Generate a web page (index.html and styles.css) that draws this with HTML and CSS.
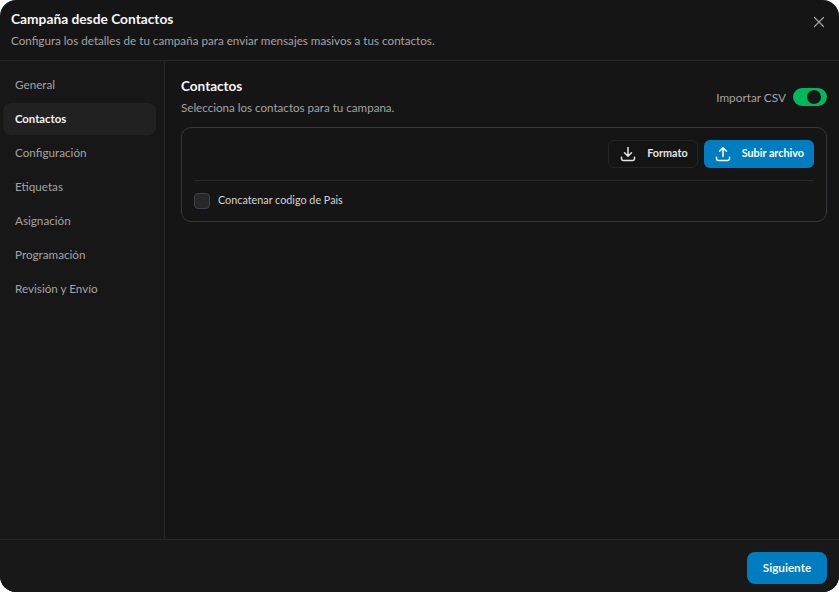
FILE: index.html
```html
<!DOCTYPE html>
<html lang="es">
<head>
<meta charset="utf-8">
<title>Campaña desde Contactos</title>
<link rel="stylesheet" href="styles.css">
</head>
<body>
<div class="modal">
  <header class="head">
    <div>
      <h1 class="title">Campaña desde Contactos</h1>
      <p class="sub">Configura los detalles de tu campaña para enviar mensajes masivos a tus contactos.</p>
    </div>
    <button class="close" aria-label="Cerrar">
      <svg width="16" height="16" viewBox="0 0 16 16" fill="none" stroke="currentColor" stroke-width="1.2" stroke-linecap="round"><path d="M3.5 3.5l9 9M12.5 3.5l-9 9"/></svg>
    </button>
  </header>
  <div class="body">
    <nav class="side">
      <a class="item">General</a>
      <a class="item active">Contactos</a>
      <a class="item">Configuración</a>
      <a class="item">Etiquetas</a>
      <a class="item">Asignación</a>
      <a class="item">Programación</a>
      <a class="item">Revisión y Envío</a>
    </nav>
    <main class="main">
      <div class="row-top">
        <div>
          <h2 class="h2">Contactos</h2>
          <p class="sub2">Selecciona los contactos para tu campana.</p>
        </div>
        <div class="csv">
          <span class="csv-label">Importar CSV</span>
          <span class="switch"><span class="knob"></span></span>
        </div>
      </div>
      <section class="card">
        <div class="actions">
          <button class="btn ghost">
            <svg width="18" height="18" viewBox="0 0 18 18" fill="none" stroke="currentColor" stroke-width="1.5" stroke-linecap="round" stroke-linejoin="round"><path d="M9 2.5v8.5M5.5 7.8L9 11.2l3.5-3.4M2.5 12.2v1.6c0 1 .7 1.7 1.7 1.7h9.6c1 0 1.7-.7 1.7-1.7v-1.6"/></svg>
            <span class="btn-text">Formato</span>
          </button>
          <button class="btn primary">
            <svg width="18" height="18" viewBox="0 0 18 18" fill="none" stroke="currentColor" stroke-width="1.5" stroke-linecap="round" stroke-linejoin="round"><path d="M9 11.5V3M5.5 6.3L9 2.8l3.5 3.5M2.5 12.2v1.6c0 1 .7 1.7 1.7 1.7h9.6c1 0 1.7-.7 1.7-1.7v-1.6"/></svg>
            <span class="btn-text">Subir archivo</span>
          </button>
        </div>
        <label class="check"><span class="box"></span><span class="check-text">Concatenar codigo de Pais</span></label>
      </section>
    </main>
  </div>
  <footer class="foot"><button class="next">Siguiente</button></footer>
</div>
</body>
</html>
```
FILE: styles.css
```css
* { box-sizing: border-box; }
html, body { margin: 0; height: 100%; background: #fff; }
body { font-family: Lato, "Open Sans", sans-serif; overflow: hidden; }
button { font: inherit; border: 0; cursor: pointer; }
h1, h2, p { margin: 0; }
.modal { width: 839px; height: 592px; background: #151515; border-radius: 16px; display: flex; flex-direction: column; overflow: hidden; }
.head { height: 61px; flex: none; border-bottom: 1px solid #272727; padding: 10px 12px 0 11px; display: flex; justify-content: space-between; }
.title { font-size: 13.75px; line-height: 18px; font-weight: 700; color: #f5f5f5; }
.sub { font-size: 11.66px; line-height: 16px; margin-top: 4px; color: #a3a3a3; }
.close { background: none; color: #a3a3a3; padding: 0; width: 16px; height: 16px; margin: 4px 0 0; }
.body { flex: 1; display: flex; min-height: 0; }
.side { width: 165px; flex: none; background: #171717; border-right: 1px solid #272727; padding: 8px 8px 0 3px; display: flex; flex-direction: column; gap: 2px; }
.item { height: 32px; border-radius: 8px; padding: 0 12px 2px; display: flex; align-items: center; font-size: 11.7px; color: #a3a3a3; }
.item.active { background: #212121; color: #f5f5f5; font-size: 11.3px; font-weight: 700; }
.main { flex: 1; padding: 16px 12px 0 16px; }
.row-top { display: flex; justify-content: space-between; align-items: flex-start; }
.h2 { font-size: 13.55px; line-height: 18px; font-weight: 700; color: #f5f5f5; }
.sub2 { font-size: 11.6px; line-height: 16px; margin-top: 5px; color: #a3a3a3; }
.csv { display: flex; align-items: center; gap: 7px; margin-top: 11px; }
.csv-label { font-size: 11.8px; color: #a3a3a3; }
.switch { width: 34px; height: 18px; border-radius: 9px; background: #00b85c; display: flex; align-items: center; justify-content: flex-end; padding: 2px 6px 2px 0; }
.knob { width: 14px; height: 14px; border-radius: 50%; background: #171717; }
.card { margin-top: 11px; height: 95px; border: 1px solid #38383c; border-radius: 10px; padding: 12px; }
.actions { display: flex; justify-content: flex-end; gap: 6px; height: 41px; border-bottom: 1px solid #272727; padding-bottom: 12px; }
.btn { height: 28px; border-radius: 6px; display: flex; align-items: center; font-size: 10.8px; font-weight: 700; padding: 0 10px; gap: 10px; }
.btn-text { margin-bottom: 3px; }
.ghost { background: #141414; border: 1px solid #242424; color: #e5e5e5; padding: 0 9px 0 10px; }
.primary { background: #007cc0; color: #fff; }
.check { display: flex; align-items: center; gap: 8px; margin-top: 12px; font-size: 10.8px; color: #d4d4d4; }
.check-text { margin-bottom: 3px; }
.box { width: 16px; height: 16px; border-radius: 4px; background: #27272a; border: 1px solid #3f3f46; }
.foot { height: 53px; flex: none; background: #181818; border-top: 1px solid #272727; display: flex; justify-content: flex-end; align-items: flex-start; padding: 12px 12px 0 0; }
.next { width: 80px; height: 32px; border-radius: 8px; background: #007cc0; color: #f5f5f5; font-size: 11.7px; font-weight: 700; padding: 0 0 2px; }
```
